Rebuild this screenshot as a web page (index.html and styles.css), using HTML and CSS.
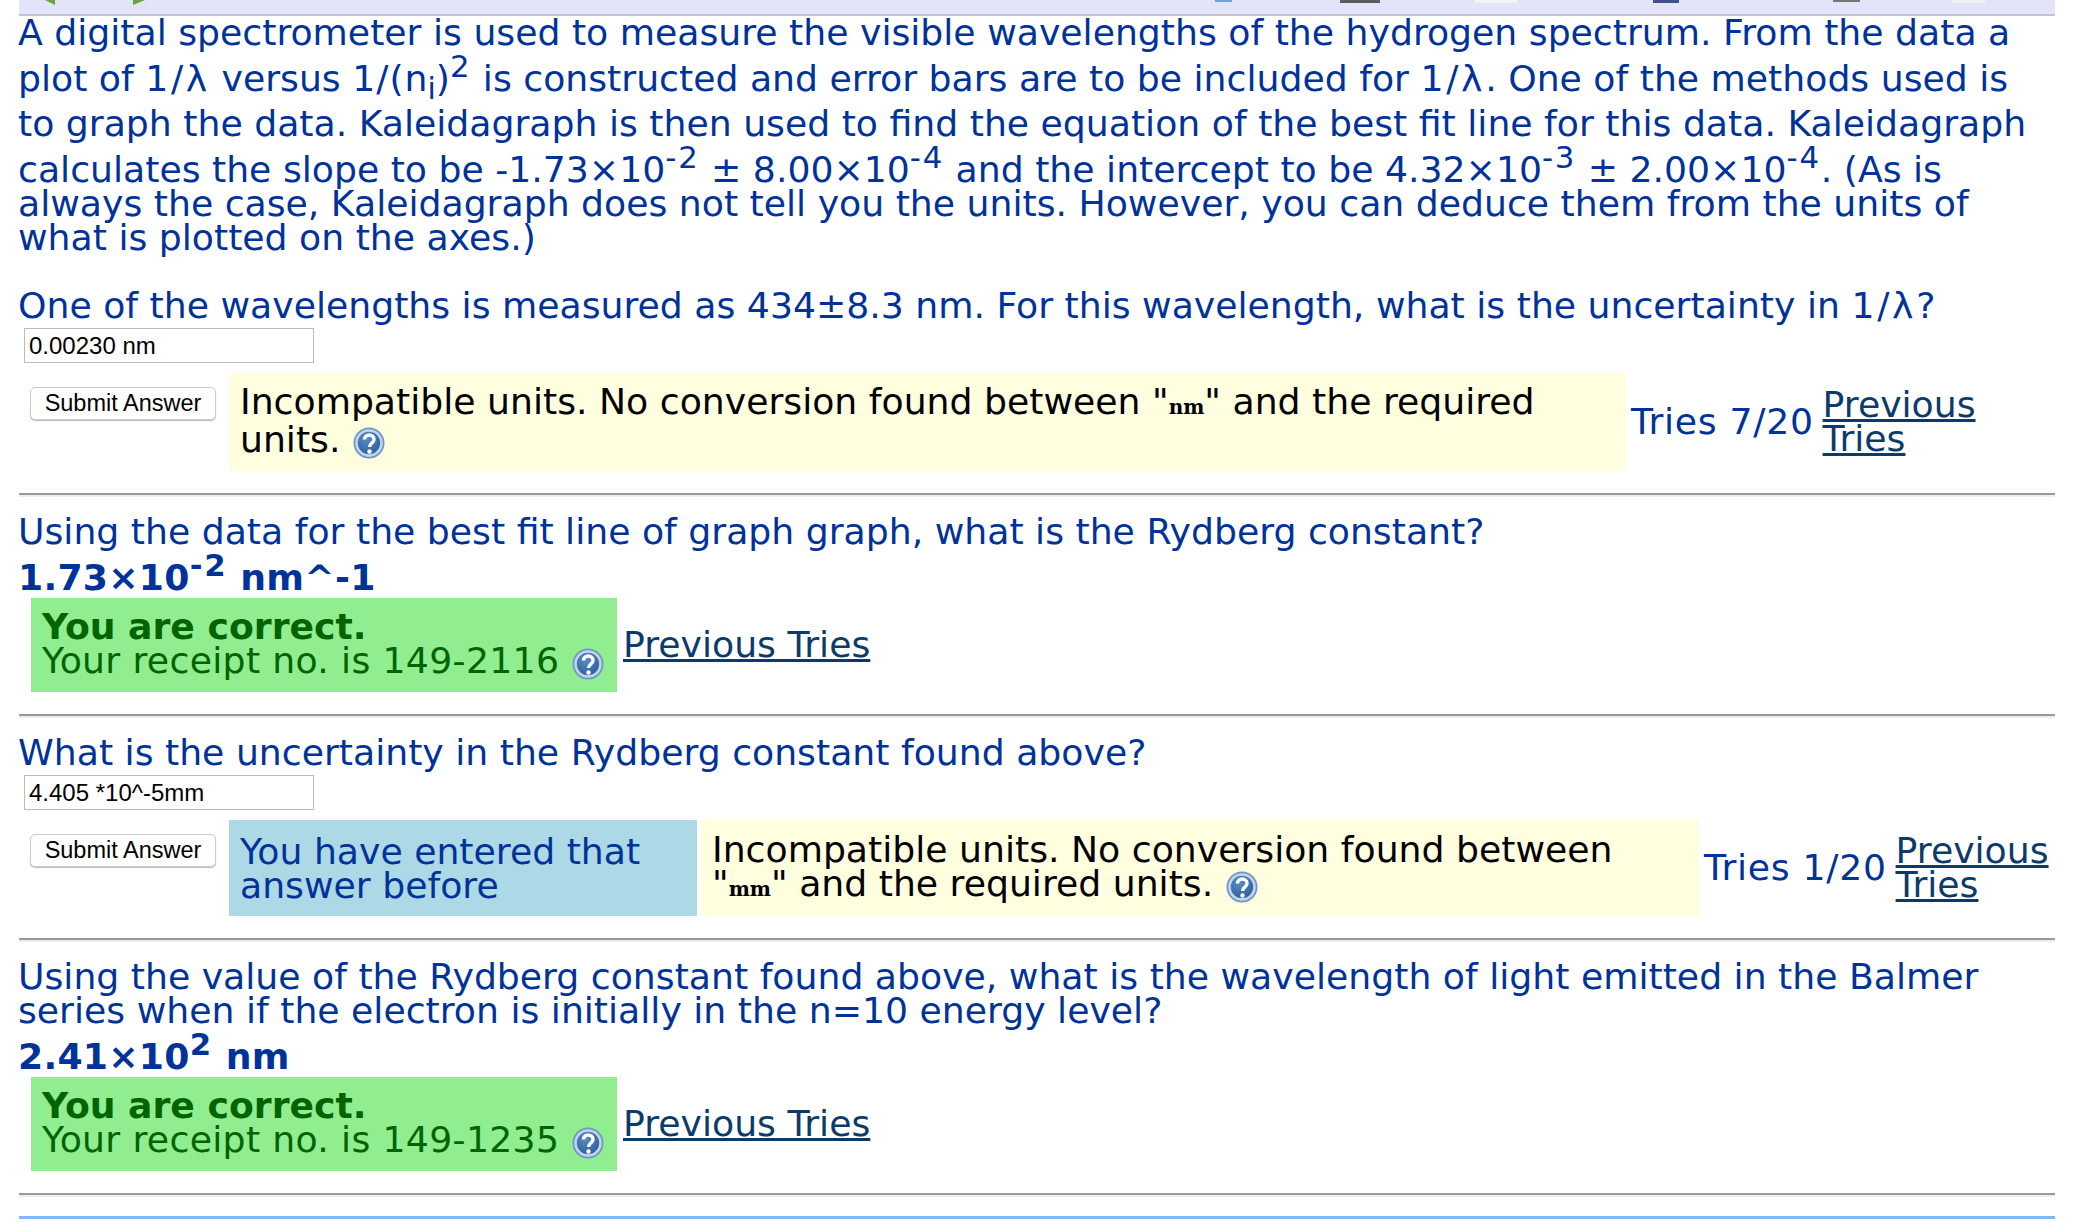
FILE: index.html
```html
<!DOCTYPE html>
<html lang="en">
<head>
    <meta charset="UTF-8">
    <meta name="viewport" content="width=device-width, initial-scale=1.0">
    <title>Hydrogen Spectrum</title>
    <link rel="stylesheet" href="styles.css">
</head>
<body>
    <div class="topbar">
        <svg class="toolbar" viewBox="0 0 2036 14" width="2036" height="14">
            <path d="M26 0 L36 0 L36 5 Z" fill="#6aa53c"/>
            <path d="M114 0 L126 0 L114 5 Z" fill="#6aa53c"/>
            <rect x="1196" width="17" height="2" fill="#6f9fe8"/>
            <rect x="1321" width="40" height="3" fill="#5c5c5c"/>
            <rect x="1456" width="42" height="3" fill="#f4f4f4"/>
            <rect x="1634" width="26" height="3" fill="#3f4f8f"/>
            <rect x="1814" width="27" height="2" fill="#777"/>
            <rect x="1933" width="33" height="3" fill="#f2f2f2"/>
        </svg>
    </div>

    <div class="part">
        <p class="text">A digital spectrometer is used to measure the visible wavelengths of the hydrogen spectrum. From the data a plot of <span class="wide">1/λ</span> versus <span class="wide-sm">1/(</span>n<sub>i</sub>)<sup>2</sup> is constructed and error bars are to be included for <span class="wide">1/λ</span>. One of the methods used is to graph the data. Kaleidagraph is then used to find the equation of the best fit line for this data. Kaleidagraph calculates the slope to be -1.73×10<sup>-2</sup> ± 8.00×10<sup>-4</sup> and the intercept to be 4.32×10<sup>-3</sup> ± 2.00×10<sup>-4</sup>. (As is always the case, Kaleidagraph does not tell you the units. However, you can deduce them from the units of what is plotted on the axes.)</p>
        <p class="text question q1">One of the wavelengths is measured as 434±8.3 nm. For this wavelength, what is the uncertainty in <span class="wide">1/λ</span>?</p>
        <input class="answer" type="text" value="0.00230 nm">
        <div class="row">
            <button class="submit">Submit Answer</button>
            <div class="msg yellow msg1">Incompatible units. No conversion found between "<tt>nm</tt>" and the required units.
                <svg class="help" viewBox="0 0 32 32"><use href="#help"></use></svg>
            </div>
            <div class="tries">Tries 7/20</div>
            <a class="prev narrow" href="#">Previous Tries</a>
        </div>
    </div>
    <hr>

    <div class="part">
        <p class="text question">Using the data for the best fit line of graph graph, what is the Rydberg constant?</p>
        <p class="given">1.73×10<sup>-2</sup> nm^-1</p>
        <div class="row correct-row">
            <div class="msg green"><b>You are correct.</b><br>Your receipt no. is 149-2116
                <svg class="help" viewBox="0 0 32 32"><use href="#help"></use></svg>
            </div>
            <a class="prev" href="#">Previous Tries</a>
        </div>
    </div>
    <hr>

    <div class="part">
        <p class="text question">What is the uncertainty in the Rydberg constant found above?</p>
        <input class="answer" type="text" value="4.405 *10^-5mm">
        <div class="row">
            <button class="submit">Submit Answer</button>
            <div class="msg blue">You have entered that answer before</div>
            <div class="msg yellow msg2">Incompatible units. No conversion found between "<tt>mm</tt>" and the required units.
                <svg class="help" viewBox="0 0 32 32"><use href="#help"></use></svg>
            </div>
            <div class="tries">Tries 1/20</div>
            <a class="prev narrow" href="#">Previous Tries</a>
        </div>
    </div>
    <hr>

    <div class="part">
        <p class="text question">Using the value of the Rydberg constant found above, what is the wavelength of light emitted in the Balmer series when if the electron is initially in the n=10 energy level?</p>
        <p class="given">2.41×10<sup>2</sup> nm</p>
        <div class="row correct-row">
            <div class="msg green"><b>You are correct.</b><br>Your receipt no. is 149-1235
                <svg class="help" viewBox="0 0 32 32"><use href="#help"></use></svg>
            </div>
            <a class="prev" href="#">Previous Tries</a>
        </div>
    </div>
    <hr>

    <div class="bottombar"></div>

    <svg class="defs" width="0" height="0">
        <defs>
            <radialGradient id="helpfill" cx="40%" cy="30%" r="80%">
                <stop offset="0" stop-color="#5c8cc4"/>
                <stop offset="1" stop-color="#2a5c9c"/>
            </radialGradient>
            <g id="help">
                <circle cx="16" cy="16" r="15.5" fill="#6f97c6"/>
                <circle cx="16" cy="16" r="12.5" fill="none" stroke="#c3d5e8" stroke-width="2.5"/>
                <circle cx="16" cy="16" r="11" fill="url(#helpfill)"/>
                <path d="M11.5 12.5 C11.5 6.5 21 6.5 21 12.5 C21 16 16.5 16 16.5 20" fill="none" stroke="#fff" stroke-width="3.4"/>
                <circle cx="16.5" cy="24.5" r="2.2" fill="#fff"/>
            </g>
        </defs>
    </svg>
</body>
</html>
```

FILE: styles.css
```css
html, body { background: #fff; }
body { margin: 0; padding: 0 19px; height: 1222px; overflow: hidden; box-sizing: border-box; font-family: "DejaVu Sans", Verdana, sans-serif; font-size: 36.2px; line-height: 34px; color: #003399; }
p { margin: 0; }
sup { font-size: 0.85em; line-height: 32px; vertical-align: 14px; letter-spacing: 1.8px; }
sub { font-size: 0.83em; line-height: 36px; }
.wide { letter-spacing: 2.7px; }
.wide-sm { letter-spacing: 1px; }
.topbar { height: 14px; background: #e3e3fa; border-bottom: 2px solid #c4c4c8; overflow: hidden; }
.toolbar { display: block; }
.part { margin-left: -1px; }
.text { padding-right: 22px; }
.question { margin-top: 20px; }
.q1 { margin-top: 34px; }
.given { font-weight: bold; letter-spacing: 0.25px; }
.answer { display: block; box-sizing: border-box; width: 290px; height: 35px; margin: 5px 0 0 6px; padding: 0 4px; border: 1px solid #bbb; font-family: "Liberation Sans", Arial, sans-serif; font-size: 24px; color: #000; }
.row { display: flex; align-items: center; margin-top: 10px; }
.submit { box-sizing: border-box; flex: none; width: 186px; height: 33px; margin: 14px 13px 0 12px; padding: 0; background: #fff; border: 1px solid #ccc; border-radius: 5px; box-shadow: 0 1px 1px #bbb; font-family: "Liberation Sans", Arial, sans-serif; font-size: 23.5px; color: #000; align-self: flex-start; }
.msg { box-sizing: border-box; flex: none; padding: 13px 11px; align-self: stretch; }
.yellow { background: #ffffe0; color: #000; }
.blue { background: #add8e6; width: 468px; margin-right: 3px; padding-top: 15px; }
.green { background: #90ee90; color: #006400; width: 586px; padding: 12px 4px 12px 11px; letter-spacing: 0.33px; }
.green b { letter-spacing: 0; }
.msg1 { width: 1397px; line-height: 38px; padding: 10px 11px 12px; }
.msg2 { width: 999px; padding-left: 12px; padding-right: 30px; }
tt { font-family: "DejaVu Serif", serif; font-weight: bold; font-size: 20px; line-height: 24px; }
.correct-row { margin: 3px 0 0 13px; }
.help { display: inline-block; width: 32px; height: 32px; vertical-align: -7px; margin-left: 1px; }
.tries { flex: none; margin-left: 5px; white-space: nowrap; letter-spacing: 0.7px; }
.prev { color: #0b3b6b; margin-left: 6px; }
.narrow { flex: none; width: 155px; margin-left: 9px; }
hr { height: 2px; margin: 22px 0 0; border: 0; background: #999; box-shadow: 0 2px 0 #eee; }
.bottombar { height: 3px; margin-top: 21px; background: #80b8f8; }
.defs { position: absolute; }
```
